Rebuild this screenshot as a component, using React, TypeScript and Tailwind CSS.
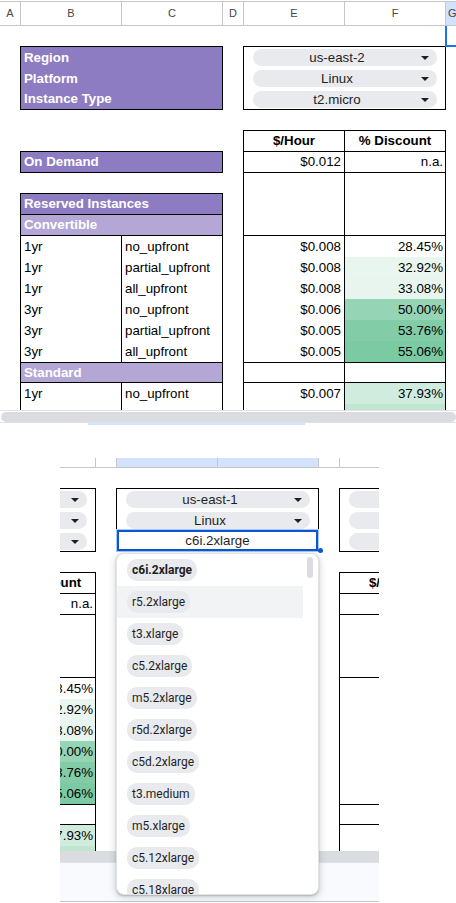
import React from "react";

type DataRow = { term: string; opt: string; price: string; disc: string; bg: string };

const CONV: DataRow[] = [
  { term: "1yr", opt: "no_upfront", price: "$0.008", disc: "28.45%", bg: "" },
  { term: "1yr", opt: "partial_upfront", price: "$0.008", disc: "32.92%", bg: "bg-[#e9f6f0]" },
  { term: "1yr", opt: "all_upfront", price: "$0.008", disc: "33.08%", bg: "bg-[#e7f5ee]" },
  { term: "3yr", opt: "no_upfront", price: "$0.006", disc: "50.00%", bg: "bg-[#95d4b5]" },
  { term: "3yr", opt: "partial_upfront", price: "$0.005", disc: "53.76%", bg: "bg-[#82cca8]" },
  { term: "3yr", opt: "all_upfront", price: "$0.005", disc: "55.06%", bg: "bg-[#7ccaa4]" },
];
const STD: DataRow[] = [
  { term: "1yr", opt: "no_upfront", price: "$0.007", disc: "37.93%", bg: "bg-[#d0ecde]" },
  { term: "", opt: "", price: "", disc: "", bg: "bg-[#c0e5d2]" },
];

const BLANK: DataRow[] = Array.from({ length: 6 }, () => ({ term: "", opt: "", price: "", disc: "", bg: "" }));
const BLANK2: DataRow[] = Array.from({ length: 2 }, () => ({ term: "", opt: "", price: "", disc: "", bg: "" }));

const ITEMS = [
  "c6i.2xlarge",
  "r5.2xlarge",
  "t3.xlarge",
  "c5.2xlarge",
  "m5.2xlarge",
  "r5d.2xlarge",
  "c5d.2xlarge",
  "t3.medium",
  "m5.xlarge",
  "c5.12xlarge",
  "c5.18xlarge",
];

function Arrow() {
  return (
    <svg width="8" height="4" viewBox="0 0 8 4" className="shrink-0">
      <path d="M0 0H8L4 4Z" fill="#1f1f1f" />
    </svg>
  );
}

function Pill({ text }: { text: string }) {
  return (
    <div className="w-[184px] h-[17px] rounded-full bg-[#e8eaed] flex items-center pr-[8px]">
      <span className="flex-1 text-center text-[13.3px] leading-none text-[#1f1f1f] whitespace-nowrap">{text}</span>
      <Arrow />
    </div>
  );
}

function PillBox({ pills }: { pills: string[] }) {
  return (
    <div className="h-[64px] border border-black flex flex-col">
      {pills.map((p, i) => (
        <div key={i} className={`${i === 2 ? "h-[20px]" : "h-[21px]"} pt-[2px] pl-[9px]`}>
          <Pill text={p} />
        </div>
      ))}
    </div>
  );
}

function PRow({ e, f, bg = "", bottom = false }: { e: string; f: string; bg?: string; bottom?: boolean }) {
  return (
    <div className={`h-[21px] shrink-0 border-x border-black flex ${bottom ? "border-b" : ""}`}>
      <div className="w-[101px] border-r border-black flex items-center justify-end pr-[3px] whitespace-nowrap">{e}</div>
      <div className={`flex-1 flex items-center justify-end pr-[2px] whitespace-nowrap ${bg}`}>{f}</div>
    </div>
  );
}

function PriceBlock({
  pills,
  onDemand,
  na = "n.a.",
  conv,
  std,
  head = true,
}: {
  pills: string[];
  onDemand: string;
  na?: string;
  conv: DataRow[];
  std: DataRow[];
  head?: boolean;
}) {
  return (
    <div className="w-[203px] shrink-0 flex flex-col text-[13.3px] leading-none">
      <div className="h-[20px]" />
      <PillBox pills={pills} />
      <div className="h-[20px]" />
      <div className="h-[22px] border border-black flex font-bold">
        <div className="w-[101px] border-r border-black flex items-center justify-center whitespace-nowrap">{head ? "$/Hour" : ""}</div>
        <div className="flex-1 flex items-center justify-center whitespace-nowrap">{head ? "% Discount" : ""}</div>
      </div>
      <PRow e={onDemand} f={na} bottom />
      <div className="h-[63px] border-x border-b border-black flex">
        <div className="w-[101px] border-r border-black" />
      </div>
      {conv.map((r, i) => (
        <PRow key={i} e={r.price} f={r.disc} bg={r.bg} />
      ))}
      <div className="h-[21px] border border-black flex">
        <div className="w-[101px] border-r border-black" />
      </div>
      {std.map((r, i) => (
        <PRow key={i} e={r.price} f={r.disc} bg={r.bg} />
      ))}
    </div>
  );
}

function LRow({ a, b }: { a: string; b: string }) {
  return (
    <div className="h-[21px] shrink-0 border-x border-black flex">
      <div className="w-[101px] border-r border-black flex items-center pl-[3px] whitespace-nowrap">{a}</div>
      <div className="flex-1 flex items-center pl-[3px] whitespace-nowrap">{b}</div>
    </div>
  );
}

function LeftBlock() {
  return (
    <div className="w-[203px] shrink-0 flex flex-col text-[13.3px] leading-none">
      <div className="h-[20px]" />
      <div className="h-[64px] border border-black bg-[#8e7cc3] text-white font-bold flex flex-col pl-[3px]">
        <div className="h-[21px] flex items-center">Region</div>
        <div className="h-[21px] flex items-center">Platform</div>
        <div className="h-[20px] flex items-center">Instance Type</div>
      </div>
      <div className="h-[41px]" />
      <div className="h-[22px] border border-black bg-[#8e7cc3] text-white font-bold flex items-center pl-[3px]">On Demand</div>
      <div className="h-[20px]" />
      <div className="h-[22px] border border-black bg-[#8e7cc3] text-white font-bold flex items-center pl-[3px]">
        Reserved Instances
      </div>
      <div className="h-[21px] border-x border-b border-black bg-[#b4a7d6] text-white font-bold flex items-center pl-[3px]">
        Convertible
      </div>
      {CONV.map((r, i) => (
        <LRow key={i} a={r.term} b={r.opt} />
      ))}
      <div className="h-[21px] border border-black bg-[#b4a7d6] text-white font-bold flex items-center pl-[3px]">Standard</div>
      {STD.map((r, i) => (
        <LRow key={i} a={r.term} b={r.opt} />
      ))}
    </div>
  );
}

function HCell({ w, children, blue = false }: { w: string; children?: React.ReactNode; blue?: boolean }) {
  return (
    <div className={`${w} shrink-0 border-r border-[#c7c7c7] flex items-center justify-center ${blue ? "bg-[#d3e3fd]" : ""}`}>
      {children}
    </div>
  );
}

export default function App() {
  return (
    <div className="relative w-[456px] h-[903px] bg-white overflow-hidden text-black font-['Liberation_Sans',Arial,sans-serif]">
      {/* top sheet */}
      <div className="h-[410px] overflow-hidden">
        <div className="mt-px h-[25px] border-y border-[#c7c7c7] flex text-[11px] text-[#444746]">
          <HCell w="w-[21px]">A</HCell>
          <HCell w="w-[101px]">B</HCell>
          <HCell w="w-[101px]">C</HCell>
          <HCell w="w-[21px]">D</HCell>
          <HCell w="w-[101px]">E</HCell>
          <HCell w="w-[101px]">F</HCell>
          <div className="flex-1 bg-[#d3e3fd] flex items-center pl-[2px]">G</div>
        </div>
        <div className="flex">
          <div className="w-[20px] shrink-0" />
          <LeftBlock />
          <div className="w-[20px] shrink-0" />
          <PriceBlock pills={["us-east-2", "Linux", "t2.micro"]} onDemand="$0.012" conv={CONV} std={STD} />
          <div className="flex-1 relative">
            <div className="absolute left-[-1px] top-0 w-[40px] h-[21px] border-l-2 border-b-2 border-[#1a73e8]" />
          </div>
        </div>
      </div>
      <div className="h-px bg-[#e3e3e3]" />
      <div className="h-[11px] pl-[1px] flex items-center">
        <div className="h-[10px] w-[470px] rounded-full bg-[#dadce0]" />
      </div>
      <div className="h-px bg-[#dde3ea]" />
      <div className="h-[2px] pl-[88px]">
        <div className="w-[217px] h-full bg-[#d3e3fd]" />
      </div>
      <div className="h-[33px]" />

      {/* bottom sheet (cropped view) */}
      <div className="ml-[60px] w-[319px]">
        <div className="h-[393px] overflow-hidden">
          <div className="-mt-[16px] -ml-[167px] w-[700px]">
            <div className="mt-px h-[25px] border-y border-[#c7c7c7] flex">
              <HCell w="w-[102px]" />
              <HCell w="w-[101px]" />
              <HCell w="w-[21px]" />
              <HCell w="w-[101px]" blue />
              <HCell w="w-[101px]" blue />
              <HCell w="w-[21px]" />
              <HCell w="w-[101px]" />
              <HCell w="w-[101px]" />
            </div>
            <div className="flex">
              <PriceBlock pills={["us-east-2", "Linux", "t2.micro"]} onDemand="$0.012" conv={CONV} std={STD} />
              <div className="w-[20px] shrink-0" />
              <PriceBlock pills={["us-east-1", "Linux", ""]} onDemand="" na="" conv={BLANK} std={BLANK2} head={false} />
              <div className="w-[20px] shrink-0" />
              <PriceBlock pills={["", "", ""]} onDemand="" na="" conv={BLANK} std={BLANK2} />
            </div>
          </div>
        </div>
        <div className="h-[11px] bg-[#dadce0]" />
        <div className="h-[40px] border-t border-[#dde3ea] border-b-[#c7c7c7] border-b bg-[#f8fafd]" />
      </div>

      {/* editing cell */}
      <div className="absolute left-[116px] top-[529px] w-[203px] h-[23px] border border-[#a8c7fa] bg-white">
        <div className="w-full h-full border-2 border-[#0b57d0] flex items-center justify-center text-[13.3px] leading-none text-[#1f1f1f]">
          c6i.2xlarge
        </div>
      </div>
      <div className="absolute left-[318px] top-[548px] w-[5px] h-[5px] rounded-full bg-[#0b57d0]" />

      {/* dropdown menu */}
      <div className="absolute left-[116px] top-[553px] w-[203px] h-[342px] bg-white rounded-lg border border-[#e3e3e3] overflow-hidden shadow-[0_2px_6px_2px_rgba(60,64,67,0.15),0_1px_2px_rgba(60,64,67,0.3)]">
        <div className="flex flex-col">
          {ITEMS.map((it, i) => (
            <div
              key={it}
              className={`h-[32px] w-[186px] shrink-0 flex items-center pl-[10px] ${i === 1 ? "bg-[#f1f3f4]" : ""}`}
            >
              <span
                className={`h-[22px] px-[5px] rounded-[10px] bg-[#e8eaed] flex items-center text-[12px] leading-none text-[#1f1f1f] font-['Roboto',Arial,sans-serif] whitespace-nowrap ${
                  i === 0 ? "font-bold" : ""
                }`}
              >
                {it}
              </span>
            </div>
          ))}
        </div>
        <div className="absolute left-[190px] top-[3px] w-[6px] h-[21px] rounded-full bg-[#dadce0]" />
      </div>
    </div>
  );
}
